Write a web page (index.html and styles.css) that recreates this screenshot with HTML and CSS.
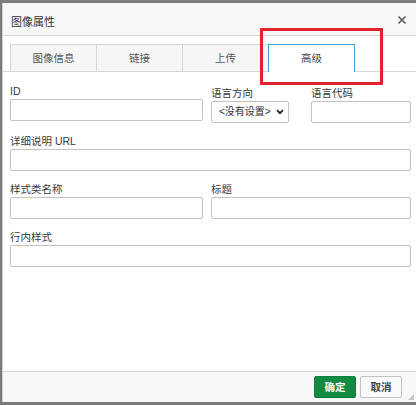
FILE: index.html
```html
<!DOCTYPE html>
<html lang="zh-CN">
<head>
<meta charset="utf-8">
<title>图像属性</title>
<link rel="stylesheet" href="styles.css">
</head>
<body>
<div class="dialog">
  <div class="titlebar">
    <span class="title">图像属性</span>
    <svg class="close" width="10" height="10" viewBox="0 0 10 10"><path d="M1.5 1.5 L8.5 8.5 M8.5 1.5 L1.5 8.5" stroke="#5a5a5a" stroke-width="1.6" fill="none"/></svg>
  </div>
  <div class="content">
    <div class="tabs">
      <div class="tab">图像信息</div>
      <div class="tab">链接</div>
      <div class="tab">上传</div>
      <div class="tab active">高级</div>
    </div>
    <div class="panel">
      <div class="row">
        <div class="field col-main"><label class="lbl">ID</label><input class="inp" type="text"></div>
        <div class="field col-dir shift"><label class="lbl">语言方向</label>
          <div class="select"><span class="select-text">&lt;没有设置&gt;</span>
            <svg class="chev" width="8" height="6" viewBox="0 0 8 6"><path d="M1 1.2 L4 4.2 L7 1.2" stroke="#222" stroke-width="1.9" fill="none"/></svg>
          </div>
        </div>
        <div class="field col-code shift"><label class="lbl">语言代码</label><input class="inp" type="text"></div>
      </div>
      <div class="row gap">
        <div class="field col-full"><label class="lbl">详细说明 URL</label><input class="inp" type="text"></div>
      </div>
      <div class="row gap">
        <div class="field col-main"><label class="lbl">样式类名称</label><input class="inp" type="text"></div>
        <div class="field col-rest"><label class="lbl">标题</label><input class="inp" type="text"></div>
      </div>
      <div class="row gap">
        <div class="field col-full"><label class="lbl">行内样式</label><input class="inp" type="text"></div>
      </div>
    </div>
  </div>
  <div class="footer">
    <button class="btn ok">确定</button>
    <button class="btn cancel">取消</button>
    <svg class="grip" width="6" height="6" viewBox="0 0 6 6"><polygon points="6,0 6,6 0,6" fill="#c4c4c4"/></svg>
  </div>
</div>
<div class="annotation"></div>
</body>
</html>
```

FILE: styles.css
```css
html, body {
  margin: 0;
  padding: 0;
}
body {
  width: 416px;
  height: 405px;
  overflow: hidden;
  background: #7c7c7c;
  font-family: "Liberation Sans", "Noto Sans CJK SC", sans-serif;
  font-size: 10.5px;
  color: #333;
}
.dialog {
  margin: 3px 0 0 2px;
  width: 414px;
  height: 399px;
  box-sizing: border-box;
  background: #fff;
  border-left: 1px solid #d4d4d4;
  display: flex;
  flex-direction: column;
}
.titlebar {
  height: 33px;
  box-sizing: border-box;
  background: #f8f8f8;
  border-bottom: 1px solid #d6d6d6;
  display: flex;
  align-items: center;
  justify-content: space-between;
  padding: 3px 9px 0 8px;
}
.title {
  color: #333;
  font-size: 11px;
}
.close {
  display: block;
  margin-top: -1px;
}
.content {
  flex: 1;
}
.tabs {
  margin-top: 8px;
  padding-left: 7px;
  height: 27px;
  border-bottom: 1px solid #d6d6d6;
  display: flex;
  align-items: flex-start;
}
.tab {
  width: 87px;
  height: 27px;
  box-sizing: border-box;
  margin-right: -1px;
  border: 1px solid #d6d6d6;
  border-bottom: none;
  background: #f6f6f6;
  color: #555;
  text-align: center;
  line-height: 26px;
}
.tab.active {
  position: relative;
  z-index: 1;
  height: 28px;
  background: #fff;
  border-color: #3d9fd3;
  color: #444;
}
.panel {
  padding: 12px 5px 0 7px;
}
.row {
  display: flex;
  align-items: flex-start;
}
.row.gap {
  margin-top: 11px;
}
.field {
  display: flex;
  flex-direction: column;
}
.shift {
  padding-top: 2px;
}
.col-main { width: 193px; }
.col-dir { width: 78px; margin-left: 8px; }
.col-code { width: 100px; margin-left: 22px; }
.col-full { width: 401px; }
.col-rest { width: 200px; margin-left: 8px; }
.lbl {
  display: block;
  height: 15px;
  line-height: 15px;
  color: #3a3a3a;
  white-space: nowrap;
}
.inp {
  display: block;
  width: 100%;
  height: 22px;
  box-sizing: border-box;
  margin: 0;
  padding: 0 4px;
  border: 1px solid #c2c2c2;
  border-radius: 2px;
  background: #fff;
  outline: none;
}
.select {
  height: 22px;
  box-sizing: border-box;
  border: 1px solid #c2c2c2;
  border-radius: 2px;
  background: #fff;
  display: flex;
  align-items: center;
  justify-content: space-between;
  padding: 0 4px 0 7px;
}
.select-text {
  color: #333;
  font-size: 10px;
  line-height: 20px;
  white-space: nowrap;
}
.chev {
  display: block;
}
.footer {
  height: 31px;
  box-sizing: border-box;
  border-top: 1px solid #d6d6d6;
  background: #f8f8f8;
  display: flex;
  justify-content: flex-end;
  align-items: flex-start;
  padding: 4px 2px 0 0;
}
.btn {
  width: 42px;
  height: 22px;
  box-sizing: border-box;
  margin: 0 0 0 4px;
  padding: 0;
  border-radius: 2px;
  font-family: "Liberation Sans", "Noto Sans CJK SC", sans-serif;
  font-size: 10.5px;
  font-weight: bold;
  line-height: 20px;
}
.btn.ok {
  background: #138a42;
  border: 1px solid #117d3b;
  color: #fff;
}
.btn.cancel {
  background: #fafafa;
  border: 1px solid #c2c2c2;
  color: #444;
}
.grip {
  display: block;
  align-self: flex-end;
  margin: 0 0 2px 6px;
}
.annotation {
  position: absolute;
  left: 260px;
  top: 28px;
  width: 123px;
  height: 57px;
  box-sizing: border-box;
  border: 3px solid #e0222b;
  border-radius: 1px;
}
```
